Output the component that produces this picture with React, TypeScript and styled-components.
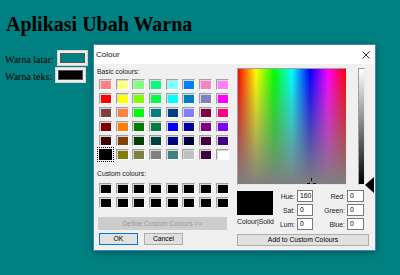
import React from "react";
import styled, { createGlobalStyle } from "styled-components";

const GlobalStyle = createGlobalStyle`
  html, body {
    margin: 0;
    padding: 0;
  }
  body {
    width: 400px;
    height: 275px;
    overflow: hidden;
    background: #008080;
    color: #000;
    font-family: "Liberation Serif", "Times New Roman", serif;
  }
`;

const Page = styled.main`
  position: relative;
  box-sizing: border-box;
  height: 275px;
  padding: 13px 5px 0;
`;

const Heading = styled.h1`
  margin: 0 0 14px 1px;
  font-size: 20px;
  line-height: 23px;
  font-weight: bold;
`;

const Field = styled.div`
  display: flex;
  align-items: flex-end;
  gap: 3px;
  height: 16px;

  & + & {
    margin-top: 1px;
  }
`;

const FieldLabel = styled.label`
  font-size: 10px;
  line-height: 10px;
  padding-bottom: 1px;
`;

const ColorInput = styled.input.attrs({ type: "color" })`
  box-sizing: border-box;
  width: 31px;
  height: 16px;
  margin: 0;
  padding: 2px;
  border: 1px solid #d4d4d4;
  background: #efefef;

  &::-webkit-color-swatch-wrapper {
    padding: 0;
  }
  &::-webkit-color-swatch {
    border: 1px solid #555;
  }
`;

// the colour dialog, a window sitting over the page
const Dialog = styled.section`
  position: absolute;
  left: 93px;
  top: 44px;
  width: 283px;
  height: 207px;
  box-sizing: border-box;
  display: flex;
  flex-direction: column;
  border: 1px solid #4680bf;
  background: #f0f0f0;
  box-shadow: 0 2px 8px rgba(0, 0, 0, 0.3);
  font-family: "Liberation Sans", Arial, sans-serif;
  font-size: 6.8px;
  color: #000;
`;

const TitleBar = styled.header`
  display: flex;
  align-items: center;
  justify-content: space-between;
  height: 19px;
  padding: 0 5px 0 2px;
  background: #fff;
`;

const TitleText = styled.span`
  font-size: 8px;
  color: #111;
`;

const Body = styled.div`
  flex: 1;
  display: flex;
  padding: 3px 0 0 3px;
`;

const LeftPane = styled.div`
  width: 140px;
  display: flex;
  flex-direction: column;
`;

const SectionLabel = styled.div<{ $top?: number }>`
  line-height: 9px;
  margin-top: ${(p) => p.$top ?? 0}px;
  color: #222;
`;

const SwatchGrid = styled.div<{ $rows: number; $top: number }>`
  display: grid;
  grid-template-columns: repeat(8, 13px);
  grid-template-rows: repeat(${(p) => p.$rows}, 11px);
  column-gap: 3.67px;
  row-gap: 3.06px;
  margin: ${(p) => p.$top}px 0 0 2px;
`;

const Swatch = styled.div<{ $color: string; $selected?: boolean }>`
  box-sizing: border-box;
  border: 1px solid;
  border-color: #a0a0a0 #fff #fff #a0a0a0;
  box-shadow: inset 1px 1px 0 #d8d8d8;
  background: ${(p) => p.$color};
  ${(p) =>
    p.$selected &&
    `
    border: 2px solid #000;
    box-shadow: none;
    outline: 1px dotted #000;
    outline-offset: 1px;
  `}
`;

const DialogButton = styled.button<{ $primary?: boolean }>`
  box-sizing: border-box;
  height: 12px;
  padding: 0;
  font: inherit;
  line-height: 10px;
  color: #000;
  background: #e1e1e1;
  border: 1px solid ${(p) => (p.$primary ? "#0078d7" : "#adadad")};

  &:disabled {
    background: #cccccc;
    border-color: #cccccc;
    color: #9a9a9a;
  }
`;

const DefineButton = styled(DialogButton)`
  width: 129px;
  height: 13px;
  margin: 9px 0 0 1px;
`;

const ButtonRow = styled.div`
  display: flex;
  gap: 6px;
  margin: 3px 0 0 2px;

  & > button {
    width: 39px;
  }
`;

const RightPane = styled.div`
  display: flex;
  flex-direction: column;
  padding-top: 1px;
`;

const SpectrumRow = styled.div`
  display: flex;
`;

const Spectrum = styled.div`
  position: relative;
  box-sizing: border-box;
  width: 110px;
  height: 117px;
  border: 1px solid;
  border-color: #a0a0a0 #e8e8e8 #e8e8e8 #a0a0a0;
  background:
    linear-gradient(to bottom, rgba(128, 128, 128, 0), #7f7f7f),
    linear-gradient(
      to right,
      #ff0000,
      #ffff00 16.67%,
      #00ff00 33.33%,
      #00ffff 50%,
      #0000ff 66.67%,
      #ff00ff 83.33%,
      #ff0000
    );
`;

const Crosshair = styled.svg`
  position: absolute;
  left: 69px;
  bottom: -1px;
`;

const LumBar = styled.div`
  box-sizing: border-box;
  width: 7px;
  height: 117px;
  margin-left: 11px;
  border: 1px solid;
  border-color: #a0a0a0 #e8e8e8 #e8e8e8 #a0a0a0;
  background: linear-gradient(to bottom, #ffffff, #000000);
`;

const LumArrow = styled.div`
  align-self: flex-end;
  width: 0;
  height: 0;
  margin-bottom: -8px;
  border-top: 8px solid transparent;
  border-bottom: 8px solid transparent;
  border-right: 9px solid #000;
`;

const ValueRow = styled.div`
  display: flex;
  margin-top: 5px;
`;

const SolidColumn = styled.div`
  width: 36px;
  display: flex;
  flex-direction: column;
`;

const SolidBox = styled.div`
  width: 36px;
  height: 24px;
  margin-top: 1px;
  background: #000;
`;

const SolidLabel = styled.div`
  margin-top: 2px;
  line-height: 9px;
  white-space: nowrap;
  color: #222;
`;

const ValueGrid = styled.div`
  display: grid;
  grid-template-columns: 24px 16px 34px 17px;
  grid-auto-rows: 12px;
  row-gap: 2px;
`;

const ValueLabel = styled.label`
  align-self: center;
  text-align: right;
  padding-right: 2px;
  line-height: 9px;
  color: #222;
`;

const ValueBox = styled.div`
  box-sizing: border-box;
  height: 12px;
  padding-left: 2px;
  line-height: 10px;
  background: #fff;
  border: 1px solid #7a7a7a;
`;

const AddButton = styled(DialogButton)`
  width: 132px;
  margin-top: 4px;
`;

const basicColours = [
  "#ff8080", "#ffff80", "#80ff80", "#00ff80", "#80ffff", "#0080ff", "#ff80c0", "#ff80ff",
  "#ff0000", "#ffff00", "#80ff00", "#00ff40", "#00ffff", "#0080c0", "#8080c0", "#ff00ff",
  "#804040", "#ff8040", "#00ff00", "#008080", "#004080", "#8080ff", "#800040", "#ff0080",
  "#800000", "#ff8000", "#008000", "#008040", "#0000ff", "#0000a0", "#800080", "#8000ff",
  "#400000", "#804000", "#004000", "#004040", "#000080", "#000040", "#400040", "#400080",
  "#000000", "#808000", "#808040", "#808080", "#408080", "#c0c0c0", "#400040", "#ffffff",
];

const values: [string, string, string, string][] = [
  ["Hue:", "160", "Red:", "0"],
  ["Sat:", "0", "Green:", "0"],
  ["Lum:", "0", "Blue:", "0"],
];

export default function App() {
  return (
    <>
      <GlobalStyle />
      <Page>
        <Heading>Aplikasi Ubah Warna</Heading>
        <Field>
          <FieldLabel>Warna latar:</FieldLabel>
          <ColorInput defaultValue="#008080" />
        </Field>
        <Field>
          <FieldLabel>Warna teks:</FieldLabel>
          <ColorInput defaultValue="#000000" />
        </Field>

        <Dialog>
          <TitleBar>
            <TitleText>Colour</TitleText>
            <svg width="8" height="8" viewBox="0 0 8 8">
              <path d="M0.5 0.5 L7.5 7.5 M7.5 0.5 L0.5 7.5" stroke="#333" strokeWidth="1" />
            </svg>
          </TitleBar>
          <Body>
            <LeftPane>
              <SectionLabel>Basic colours:</SectionLabel>
              <SwatchGrid $rows={6} $top={3}>
                {basicColours.map((c, i) => (
                  <Swatch key={i} $color={c} $selected={i === 40} />
                ))}
              </SwatchGrid>
              <SectionLabel $top={9}>Custom colours:</SectionLabel>
              <SwatchGrid $rows={2} $top={5}>
                {Array.from({ length: 16 }, (_, i) => (
                  <Swatch key={i} $color="#000" />
                ))}
              </SwatchGrid>
              <DefineButton disabled>Define Custom Colours &gt;&gt;</DefineButton>
              <ButtonRow>
                <DialogButton $primary>OK</DialogButton>
                <DialogButton>Cancel</DialogButton>
              </ButtonRow>
            </LeftPane>
            <RightPane>
              <SpectrumRow>
                <Spectrum>
                  <Crosshair width="9" height="7" viewBox="0 0 9 7">
                    <path d="M4.5 0 V3 M0 5.5 H3 M6 5.5 H9" stroke="#000" strokeWidth="1" />
                  </Crosshair>
                </Spectrum>
                <LumBar />
                <LumArrow />
              </SpectrumRow>
              <ValueRow>
                <SolidColumn>
                  <SolidBox />
                  <SolidLabel>Colour|Solid</SolidLabel>
                </SolidColumn>
                <ValueGrid>
                  {values.map(([l1, v1, l2, v2]) => (
                    <React.Fragment key={l1}>
                      <ValueLabel>{l1}</ValueLabel>
                      <ValueBox>{v1}</ValueBox>
                      <ValueLabel>{l2}</ValueLabel>
                      <ValueBox>{v2}</ValueBox>
                    </React.Fragment>
                  ))}
                </ValueGrid>
              </ValueRow>
              <AddButton>Add to Custom Colours</AddButton>
            </RightPane>
          </Body>
        </Dialog>
      </Page>
    </>
  );
}
